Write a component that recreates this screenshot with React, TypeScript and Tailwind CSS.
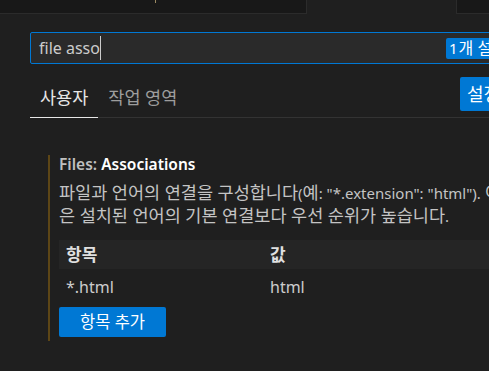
// Hangul runs get a larger size so they take the width Malgun Gothic gives them
function K({ children }: { children: React.ReactNode }) {
  return <span className="text-[17.5px]">{children}</span>
}

export default function App() {
  return (
    <div className="w-[489px] h-[371px] overflow-hidden bg-[#1f1f1f] font-['Noto_Sans','Noto_Sans_CJK_KR',sans-serif] text-[#cccccc]">
      {/* editor tab strip */}
      <div className="flex h-[14px]">
        <div className="relative w-[307px] bg-[#181818] border-b border-r border-[#2b2b2b]">
          <span className="absolute left-[155px] top-0 w-px h-[3px] bg-[#9c8a62]" />
        </div>
        <div className="w-[149px] bg-[#1f1f1f]" />
        <div className="flex-1 bg-[#181818] border-b border-l border-[#2b2b2b]" />
      </div>

      {/* search */}
      <div className="pl-[30px] mt-[18px]">
        <div className="w-[480px] h-[32px] flex items-center overflow-hidden border border-[#0078d4] rounded-[2px] bg-[#2a2a2a] pl-[8px]">
          <div className="w-[407px] shrink-0 flex items-center">
            <span className="text-[16px] text-[#cccccc] leading-none">file asso</span>
            <span className="w-px h-[24px] bg-[#cccccc]" />
          </div>
          <span className="shrink-0 h-[21px] px-[3px] flex items-center rounded-[2px] bg-[#0078d4] text-white text-[16px] whitespace-nowrap">
            <span className="text-[15px] mr-[1px]">1</span>개 설정 찾음
          </span>
        </div>
      </div>

      {/* scope tabs */}
      <div className="ml-[30px] mt-[13px] w-[600px] h-[41px] flex border-b border-[#333333]">
        <div className="w-[430px] flex">
          <div className="px-[10px] flex items-center -mb-px border-b border-[#e7e7e7] text-[17.5px] text-[#e7e7e7]">사용자</div>
          <div className="px-[10px] flex items-center text-[17.5px] text-[#9d9d9d]">작업 영역</div>
        </div>
        <button className="self-start h-[34px] px-[7px] rounded-[2px] bg-[#0078d4] text-white text-[18px] whitespace-nowrap">
          설정 백업 및 동기화
        </button>
      </div>

      {/* setting item */}
      <div className="ml-[48px] mt-[37px] w-[700px] border-l-2 border-[#5d4616] pl-[9px] pb-[4px]">
        <div className="text-[15.5px] leading-[18px] font-semibold whitespace-nowrap">
          <span className="text-[#c0c0c0]">Files: </span>
          <span className="text-white">Associations</span>
        </div>
        <div className="mt-[8px] text-[15px] leading-[22px] text-[#c4c4c4] whitespace-nowrap">
          <K>파일과 언어의 연결을 구성합니다</K>(<K>예</K>: "*.extension": "html"). <K>이 항목</K>
          <br />
          <K>은 설치된 언어의 기본 연결보다 우선 순위가 높습니다</K>.
        </div>

        <div className="mt-[13px] w-[600px] text-[16px]">
          <div className="h-[29px] flex items-center bg-[#252525] font-semibold text-[#e0e0e0] text-[17px]">
            <div className="w-[204px] pl-[7px]">항목</div>
            <div className="pl-[7px]">값</div>
          </div>
          <div className="h-[36px] flex items-center text-[#cccccc]">
            <div className="w-[204px] pl-[7px]">*.html</div>
            <div className="pl-[7px]">html</div>
          </div>
        </div>

        <button className="mt-[2px] w-[107px] h-[30px] rounded-[2px] bg-[#0078d4] text-white text-[16.5px]">
          항목 추가
        </button>
      </div>
    </div>
  )
}
